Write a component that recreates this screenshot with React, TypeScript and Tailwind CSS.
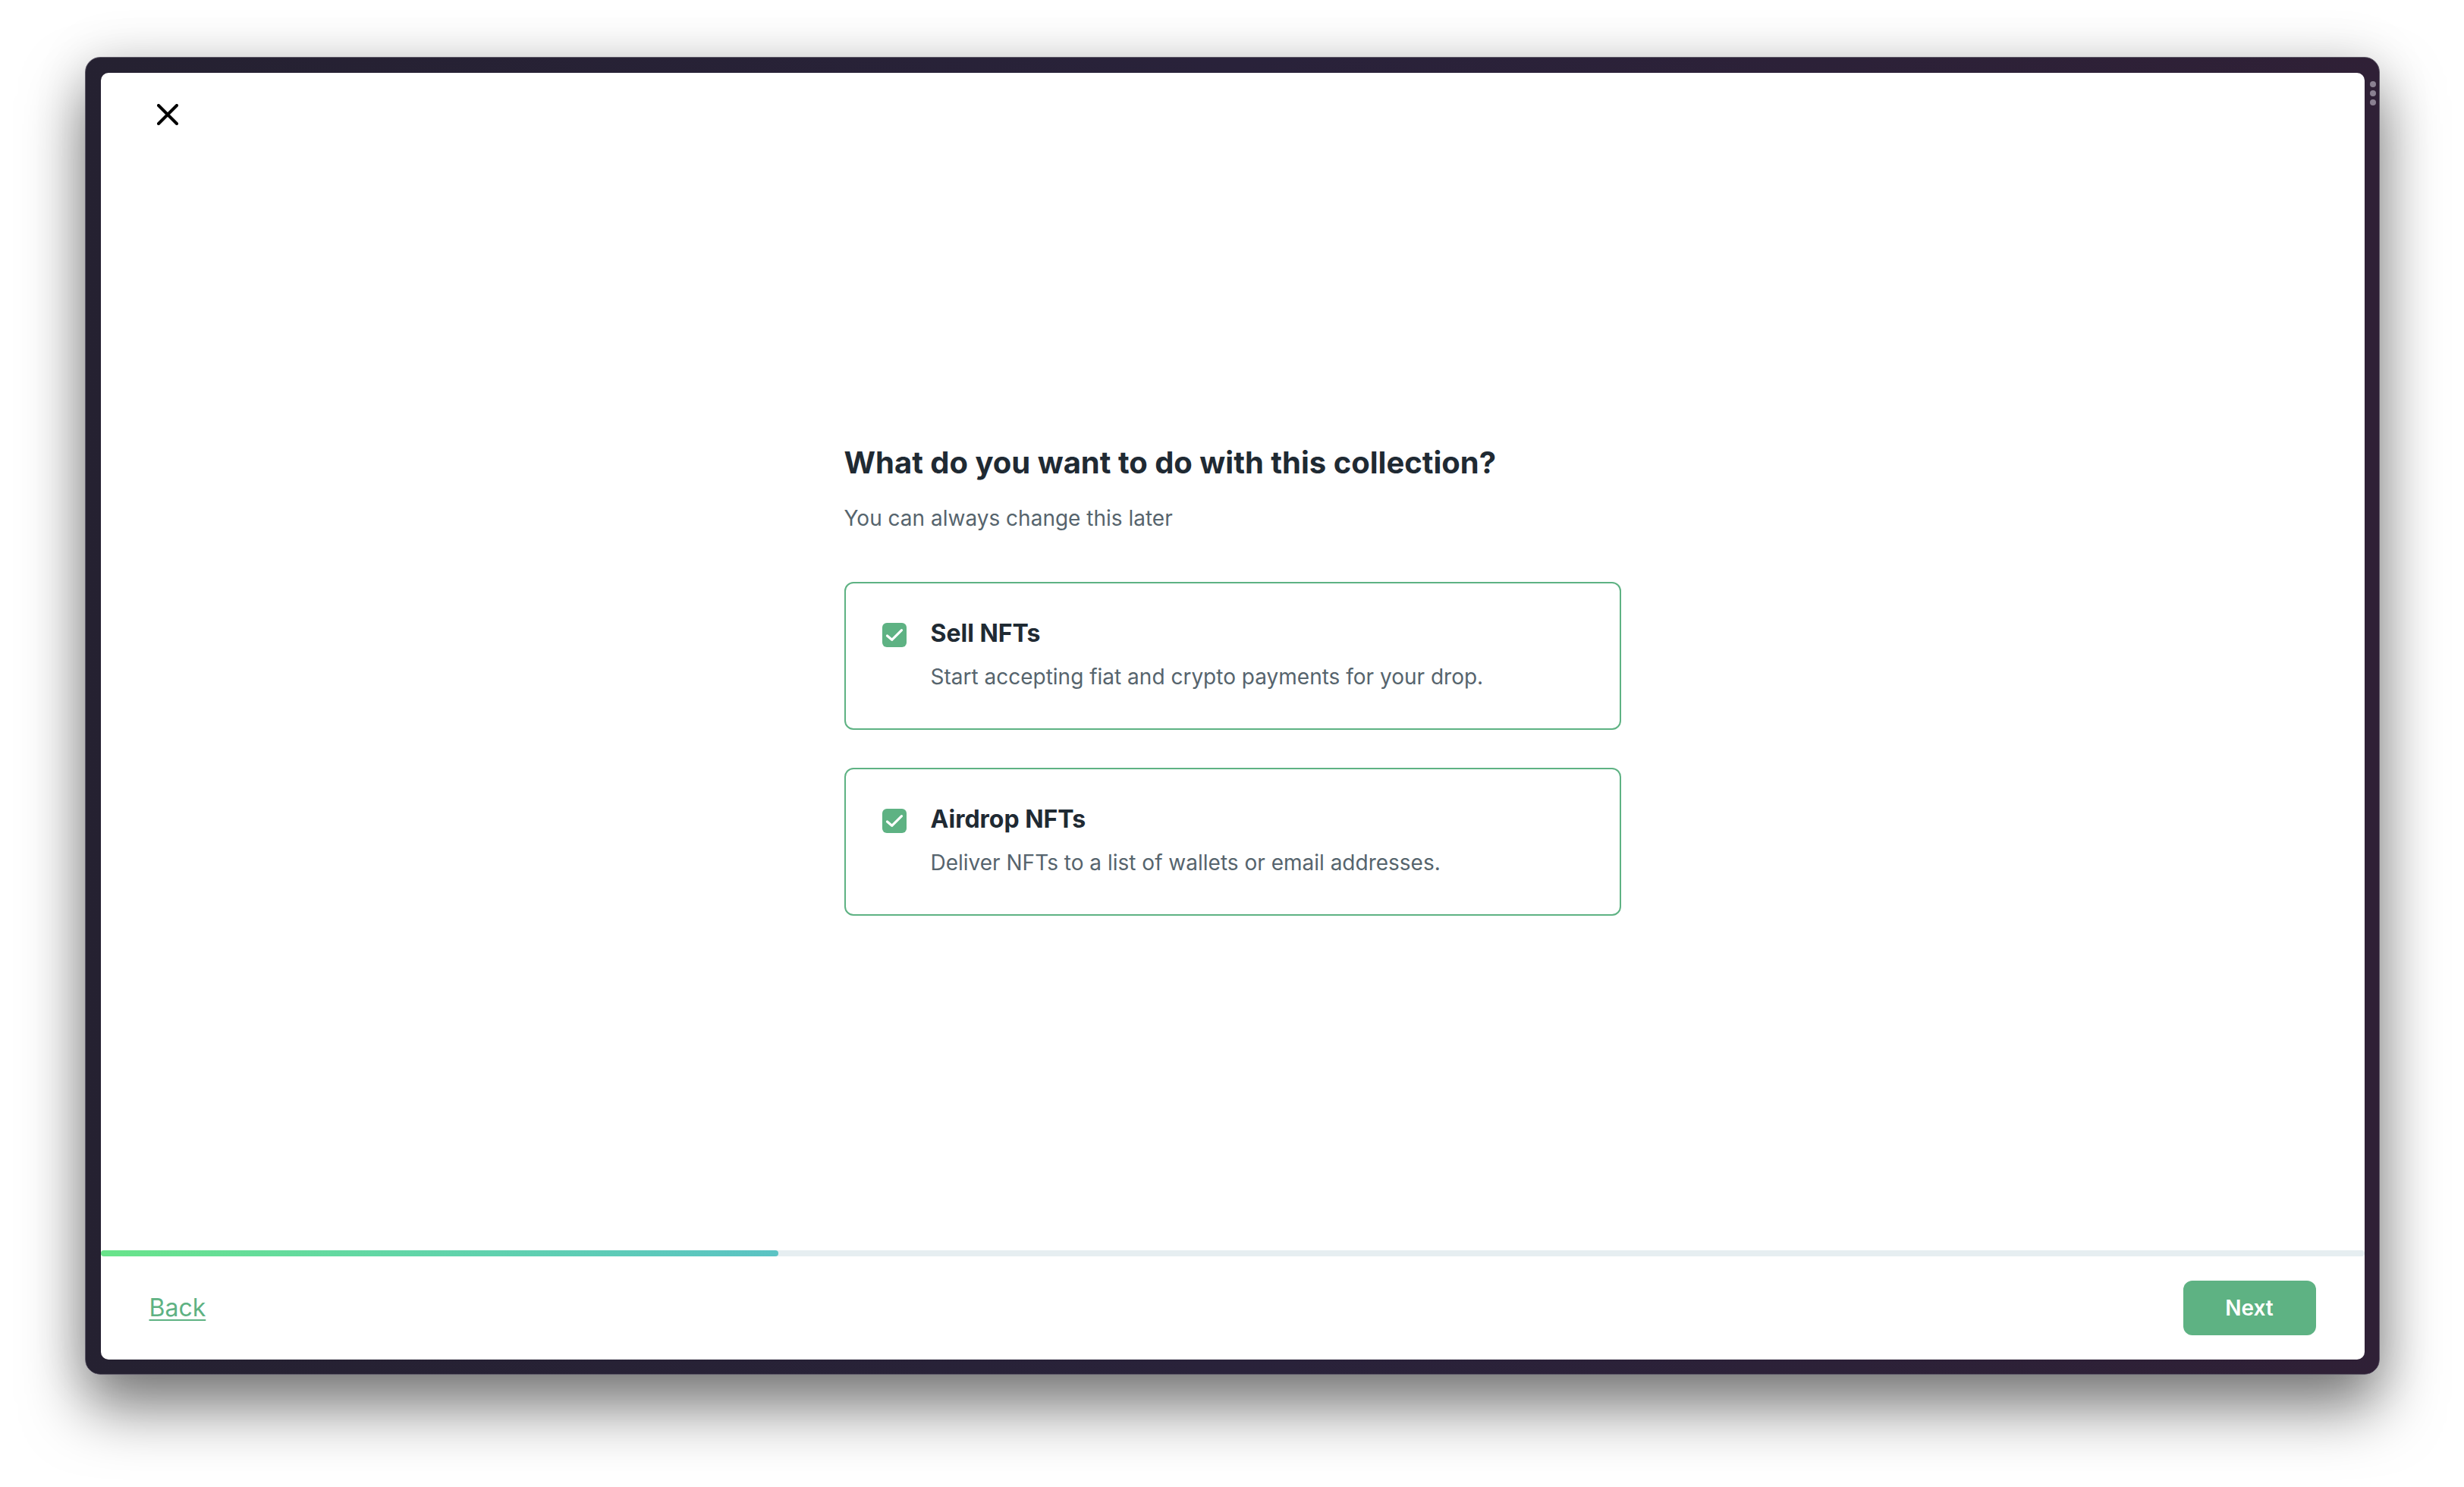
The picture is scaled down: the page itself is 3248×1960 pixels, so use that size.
import React from "react";

function Check() {
  return (
    <div className="mt-[6px] flex h-[32px] w-[32px] shrink-0 items-center justify-center rounded-[6px] bg-[#5eb283]">
      <svg width="32" height="32" viewBox="0 0 32 32" fill="none">
        <path d="M6.5 17 L12.7 22.3 L25.5 9.6" stroke="white" strokeWidth="3.2" strokeLinecap="round" strokeLinejoin="round" />
      </svg>
    </div>
  );
}

function Card({ title, desc }: { title: string; desc: string }) {
  return (
    <div className="flex w-[1024px] gap-[32px] rounded-[12px] border-2 border-[#5eb283] pt-[46px] pb-[48px] pl-[48px] pr-[48px]">
      <Check />
      <div className="flex flex-col gap-[17px]">
        <div className="text-[32px] leading-[40px] font-bold text-[#1f2a33]">{title}</div>
        <div className="text-[28px] leading-[40px] text-[#56646d]">{desc}</div>
      </div>
    </div>
  );
}

export default function App() {
  return (
    <div className="min-h-[1960px] w-[3248px] bg-white pt-[75px] flex justify-center" style={{ fontFamily: "Inter, 'Noto Sans', sans-serif" }}>
      <div className="relative h-[1737px] w-[3025px] rounded-[20px] border border-[#5f5a68] bg-linear-to-r from-[#252131] via-[#29223a] to-[#2f2036] pt-[20px] pl-[20px] pr-[19px] pb-[19px] shadow-[0_44px_80px_rgba(0,0,0,0.5),0_0_70px_rgba(0,0,0,0.12)]">
        <div className="absolute left-[3011px] top-[31px] flex flex-col gap-[4px]">
          <div className="h-[8px] w-[8px] rounded-full bg-[#8a8091]" />
          <div className="h-[8px] w-[8px] rounded-full bg-[#8a8091]" />
          <div className="h-[8px] w-[8px] rounded-full bg-[#8a8091]" />
        </div>
        <div className="flex h-full w-full flex-col overflow-hidden rounded-[10px] bg-white">
          <div className="h-[80px] shrink-0 pl-[74px] pt-[41px]">
            <svg width="28" height="28" viewBox="0 0 28 28" fill="none">
              <path d="M2 2 L26 26 M26 2 L2 26" stroke="#000" strokeWidth="4" strokeLinecap="round" />
            </svg>
          </div>
          <div className="flex flex-1 items-center justify-center pb-[32px]">
            <div className="flex w-[1024px] flex-col">
              <h1 className="text-[40px] leading-[48px] font-bold text-[#1f2a33]">
                What do you want to do with this collection?
              </h1>
              <p className="mt-[29px] text-[28px] leading-[40px] text-[#56646d]">You can always change this later</p>
              <div className="mt-[64px] flex flex-col gap-[50px]">
                <Card title="Sell NFTs" desc="Start accepting fiat and crypto payments for your drop." />
                <Card title="Airdrop NFTs" desc="Deliver NFTs to a list of wallets or email addresses." />
              </div>
            </div>
          </div>
          <div className="h-[8px] w-full shrink-0 rounded-full bg-[#e6eef1]">
            <div className="h-full w-[893px] rounded-full bg-linear-to-r from-[#69e48a] to-[#5bc3c4]" />
          </div>
          <div className="flex h-[136px] shrink-0 items-center justify-between px-[64px]">
            <a className="text-[32px] text-[#5eb283] underline decoration-2 underline-offset-[4px] cursor-pointer">Back</a>
            <button className="h-[72px] w-[175px] rounded-[12px] bg-[#5eb283] text-[28px] font-semibold text-white">Next</button>
          </div>
        </div>
      </div>
    </div>
  );
}
